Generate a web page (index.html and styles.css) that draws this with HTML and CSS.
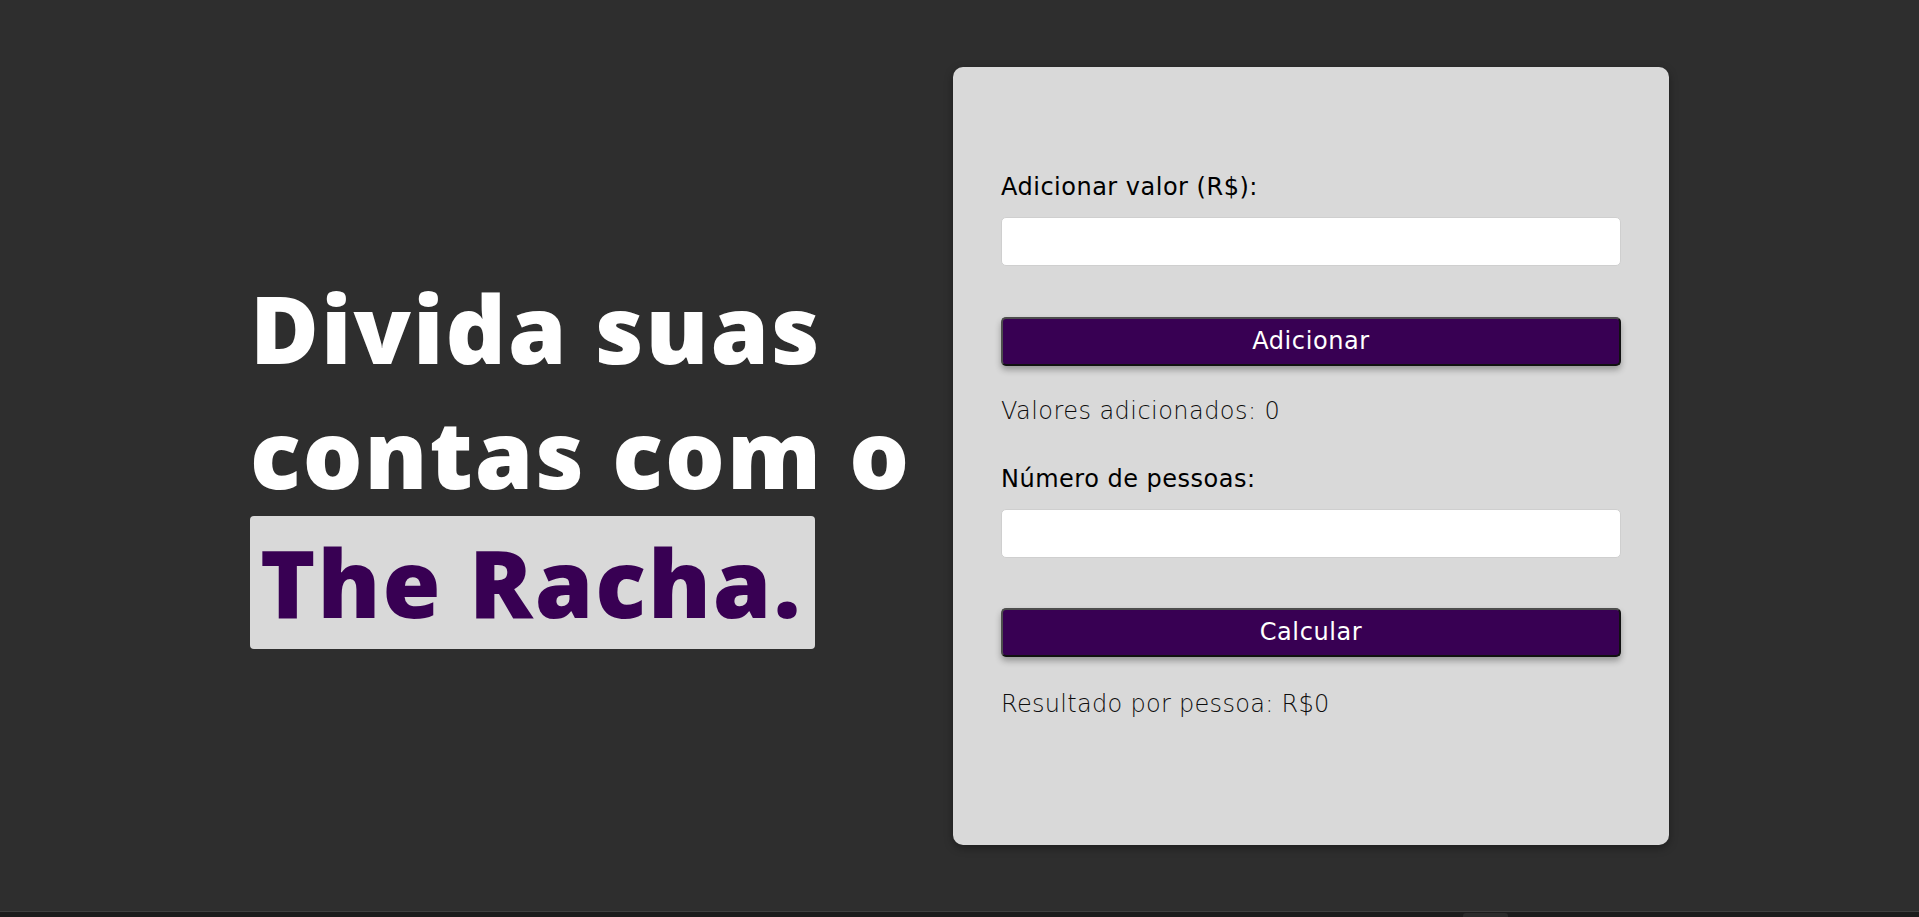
FILE: index.html
```html
<!DOCTYPE html>
<html lang="pt-BR">
<head>
<meta charset="utf-8">
<title>The Racha</title>
<link rel="stylesheet" href="styles.css">
</head>
<body>
<main class="page">
  <section class="hero">
    <h1 class="hero-title">Divida suas contas com o <span class="brand">The Racha.</span></h1>
  </section>
  <section class="card">
    <label class="field-label" for="valor">Adicionar valor (R$):</label>
    <input class="field-input" id="valor" type="number">
    <button class="btn" type="button">Adicionar</button>
    <p class="info">Valores adicionados: 0</p>
    <label class="field-label second" for="pessoas">Número de pessoas:</label>
    <input class="field-input" id="pessoas" type="number">
    <button class="btn btn-last" type="button">Calcular</button>
    <p class="info info-last">Resultado por pessoa: R$0</p>
  </section>
</main>
<div class="bottom-bar"><div class="bottom-thumb"></div></div>
</body>
</html>
```

FILE: styles.css
```css
* { box-sizing: border-box; }

html, body {
  margin: 0;
  padding: 0;
  background: #2e2e2e;
  font-family: "DejaVu Sans", "Open Sans", sans-serif;
  overflow: hidden;
}

.page {
  height: 911px;
  display: flex;
  justify-content: center;
  align-items: center;
}

.hero {
  width: 703px;
  margin-top: 4px;
}

.hero-title {
  margin: 0;
  font-family: "Open Sans", "Liberation Sans", sans-serif;
  font-size: 94px;
  font-weight: 800;
  line-height: 125px;
  color: #ffffff;
  letter-spacing: 2px;
}

.brand {
  display: inline-block;
  background: #d9d9d9;
  color: #380053;
  border-radius: 4px;
  padding: 4px 12px 4px 10px;
  line-height: 125px;
}

.card {
  width: 716px;
  height: 778px;
  flex-shrink: 0;
  background: #d9d9d9;
  border-radius: 10px;
  padding: 105px 48px 0 48px;
  display: flex;
  flex-direction: column;
  box-shadow: 0 3px 8px rgba(0,0,0,0.35);
}

.field-label {
  font-size: 24px;
  line-height: 30px;
  font-weight: 400;
  letter-spacing: 0.5px;
  color: #000;
}

.field-label.second {
  margin-top: 38px;
}

.field-input {
  margin-top: 15px;
  height: 49px;
  width: 100%;
  border: 1px solid #cfcfcf;
  border-radius: 5px;
  background: #fff;
  font-size: 18px;
  padding: 0 12px;
}

.btn {
  margin-top: 51px;
  height: 49px;
  width: 100%;
  background: #380053;
  color: #fff;
  font-family: inherit;
  font-size: 24px;
  font-weight: 400;
  letter-spacing: 0.6px;
  border-radius: 5px;
  border: 2px solid;
  border-color: #4d4d4d #111 #111 #4d4d4d;
  box-shadow: 0 4px 6px rgba(0,0,0,0.3);
  cursor: pointer;
}

.btn.btn-last {
  margin-top: 50px;
}

.info {
  margin: 30px 0 0 0;
  font-size: 24px;
  line-height: 30px;
  font-weight: 200;
  letter-spacing: 0.45px;
  color: #0d0d0d;
}

.info.info-last {
  margin-top: 32px;
  letter-spacing: 0.3px;
}

.bottom-bar {
  height: 6px;
  background: #1c1c1c;
  border-top: 1px solid #3f3f3f;
  position: relative;
}

.bottom-thumb {
  position: absolute;
  left: 1463px;
  top: 1px;
  width: 45px;
  height: 6px;
  border-radius: 3px;
  background: #2b2b2b;
}
```
